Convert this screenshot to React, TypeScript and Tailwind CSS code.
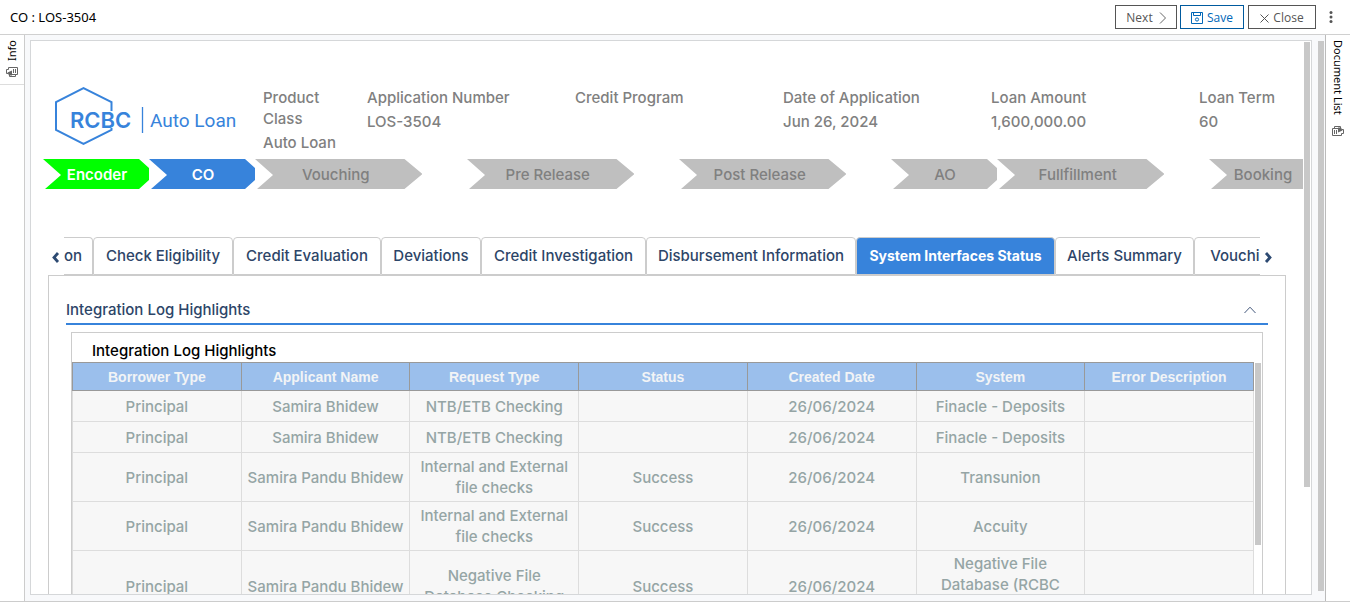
import type { ReactNode } from "react";

const FIELDS = [
  { label: "Product Class", value: "Auto Loan", span: "col-span-1 pr-5" },
  { label: "Application Number", value: "LOS-3504", span: "col-span-2" },
  { label: "Credit Program", value: "", span: "col-span-2" },
  { label: "Date of Application", value: "Jun 26, 2024", span: "col-span-2" },
  { label: "Loan Amount", value: "1,600,000.00", span: "col-span-2" },
  { label: "Loan Term", value: "60", span: "col-span-1" },
];

const STAGES = [
  { name: "Encoder", wide: false, tone: "bg-[#00ff00] text-white font-semibold" },
  { name: "CO", wide: false, tone: "bg-[#3783db] text-white font-semibold" },
  { name: "Vouching", wide: true, tone: "bg-[#bfbfbf] text-[#808080]" },
  { name: "Pre Release", wide: true, tone: "bg-[#bfbfbf] text-[#808080]" },
  { name: "Post Release", wide: true, tone: "bg-[#bfbfbf] text-[#808080]" },
  { name: "AO", wide: false, tone: "bg-[#bfbfbf] text-[#808080]" },
  { name: "Fullfillment", wide: true, tone: "bg-[#bfbfbf] text-[#808080]" },
  { name: "Booking", wide: false, tone: "bg-[#bfbfbf] text-[#808080]" },
];

const TABS = [
  { name: "on", width: "w-[29px] rounded-tl-none border-l-0 text-left" },
  { name: "Check Eligibility", width: "w-[140px]" },
  { name: "Credit Evaluation", width: "w-[148px]" },
  { name: "Deviations", width: "w-[100px]" },
  { name: "Credit Investigation", width: "w-[165px]" },
  { name: "Disbursement Information", width: "w-[210px]" },
  { name: "System Interfaces Status", width: "w-[199px]", active: true },
  { name: "Alerts Summary", width: "w-[139px]" },
  { name: "Vouching", width: "w-[100px]" },
];

const COLUMNS = [
  "Borrower Type",
  "Applicant Name",
  "Request Type",
  "Status",
  "Created Date",
  "System",
  "Error Description",
];

const ROWS = [
  { height: "h-[31px]", cells: ["Principal", "Samira Bhidew", "NTB/ETB Checking", "", "26/06/2024", "Finacle - Deposits", ""] },
  { height: "h-[31px]", cells: ["Principal", "Samira Bhidew", "NTB/ETB Checking", "", "26/06/2024", "Finacle - Deposits", ""] },
  { height: "h-[49px]", cells: ["Principal", "Samira Pandu Bhidew", "Internal and External\nfile checks", "Success", "26/06/2024", "Transunion", ""] },
  { height: "h-[49px]", cells: ["Principal", "Samira Pandu Bhidew", "Internal and External\nfile checks", "Success", "26/06/2024", "Accuity", ""] },
  { height: "h-[71px]", top: true, cells: ["Principal", "Samira Pandu Bhidew", "Negative File\nDatabase Checking", "Success", "26/06/2024", "Negative File\nDatabase (RCBC", ""] },
];

function Logo() {
  return (
    <svg width="186" height="60" viewBox="0 0 186 60" role="img" aria-label="RCBC Auto Loan" className="max-w-none">
      <path
        d="M56.5 24V15L28.5 1.2L1 15V43L28.5 57L56.5 43V41"
        fill="none"
        stroke="#3783db"
        strokeWidth="2"
      />
      <text x="15" y="41" fill="#3783db" className="font-['Inter'] text-[22px] font-semibold">RCBC</text>
      <path d="M87.5 20V46" stroke="#3783db" strokeWidth="1.3" />
      <text x="95" y="40" fill="#3783db" className="font-['Roboto'] text-[19px] font-normal">Auto Loan</text>
    </svg>
  );
}

function PanelIcon({ flip = false }: { flip?: boolean }) {
  return (
    <svg width="12" height="11" viewBox="0 0 12 11" fill="none" stroke="#666" className={flip ? "rotate-180" : ""} aria-hidden="true">
      <path d="M2.5 2.5V.5H11.5V7.5H5M9.5 7.5V9.5H3.5V7.5M2.5 2.5H.5V6.5H2M7.5 2V6M9.5 2V6" />
      <path d="M1.5 5.5L6 3.5V8.5H3Z" fill="#666" stroke="none" />
    </svg>
  );
}

function ToolButton({ children, tone }: { children: ReactNode; tone: string }) {
  return (
    <button type="button" className={"flex h-6 items-center justify-center border pt-0.5 text-xs leading-4 " + tone}>
      {children}
    </button>
  );
}

function Chevron({ d }: { d: string }) {
  return (
    <svg width="9" height="11" viewBox="0 0 9 11" fill="none" stroke="#2d4a72" strokeWidth="2.8" aria-hidden="true">
      <path d={d} />
    </svg>
  );
}

export default function App() {
  return (
    <div className="flex h-screen flex-col overflow-hidden border-b border-[#ccc] bg-white font-['Inter',sans-serif] text-[15px] font-medium">
      <header className="flex h-[35px] shrink-0 items-center justify-between border-b border-[#d0d0d0] pl-2.5 pr-3 font-['Open_Sans',sans-serif] font-normal">
        <h1 className="pt-0.5 font-['Noto_Sans',sans-serif] text-[13px] text-black">CO : LOS-3504</h1>
        <div className="flex items-center gap-[3px]">
          <ToolButton tone="w-[62px] gap-1.5 border-[#555] text-[#555]">
            Next
            <svg width="7" height="12" viewBox="0 0 7 12" fill="none" stroke="#666" aria-hidden="true">
              <path d="M1 .5L6.5 6L1 11.5" />
            </svg>
          </ToolButton>
          <ToolButton tone="w-16 gap-1 border-[#005a9e] text-[#0067b8]">
            <svg width="12" height="12" viewBox="0 0 12 12" fill="none" stroke="#0067b8" aria-hidden="true">
              <path d="M.5.5H11.5V11.5H.5ZM2.5.5V3.5H9.5V.5" />
              <circle cx="6" cy="7.5" r="1.6" />
            </svg>
            Save
          </ToolButton>
          <div className="pl-px">
            <ToolButton tone="w-[68px] gap-1 border-[#555] text-[#555]">
              <svg width="9" height="9" viewBox="0 0 9 9" fill="none" stroke="#555" aria-hidden="true">
                <path d="M.5.5L8.5 8.5M8.5.5L.5 8.5" />
              </svg>
              Close
            </ToolButton>
          </div>
          <button type="button" aria-label="More" className="flex w-[19px] justify-end pr-[5px]">
            <svg width="4" height="12" viewBox="0 0 4 12" fill="#555" aria-hidden="true">
              <circle cx="2" cy="1.6" r="1.5" />
              <circle cx="2" cy="6" r="1.5" />
              <circle cx="2" cy="10.4" r="1.5" />
            </svg>
          </button>
        </div>
      </header>

      <div className="flex min-h-0 flex-1">
        <aside className="w-[25px] shrink-0 border-r border-[#ccc] font-['Noto_Sans',sans-serif] font-normal">
          <button type="button" className="flex h-[50px] w-full flex-col items-center justify-between border-b border-[#ddd] pb-1.5 pt-[5px] text-[11px] leading-4 text-black">
            <span className="rotate-180 [writing-mode:vertical-rl]">Info</span>
            <PanelIcon />
          </button>
        </aside>

        <div className="flex min-w-0 flex-1 bg-[#f8f9fb] pl-[5px] pt-[5px]">
          <main className="mb-1.5 flex min-w-0 flex-1 overflow-hidden border border-[#d5d7d9] bg-white">
            <div className="min-w-0 flex-1 overflow-hidden pt-[46px]">
              <section className="grid grid-cols-12 pl-6 text-[#808080]">
                <div className="col-span-2">
                  <Logo />
                </div>
                {FIELDS.map((f) => (
                  <div key={f.label} className={f.span + " leading-[21px]"}>
                    <div>{f.label}</div>
                    <div className="-mr-5 mt-[3px]">{f.value}</div>
                  </div>
                ))}
              </section>

              <ol className="-mr-3 ml-3 mt-1.5 grid grid-cols-12">
                {STAGES.map((s) => (
                  <li key={s.name} className={s.wide ? "col-span-2" : "col-span-1"}>
                    <div
                      className={
                        "flex h-[30px] items-center justify-center pt-0.5 " +
                        (s.wide
                          ? "w-[79%] pr-1.5 [clip-path:polygon(0_0,calc(100%_-_18px)_0,100%_50%,calc(100%_-_18px)_100%,2px_100%,18px_53%)] "
                          : "w-full pl-0.5 [clip-path:polygon(0_0,calc(100%_-_10px)_0,100%_9px,100%_21px,calc(100%_-_10px)_100%,2px_100%,18px_53%)] ") +
                        s.tone
                      }
                    >
                      {s.name}
                    </div>
                  </li>
                ))}
              </ol>

              <div className="mx-[17px] mt-12 flex text-[#2d4568]">
                <button type="button" aria-label="Previous tabs" className="w-4 pl-[3px] pt-0.5">
                  <Chevron d="M7 1L3 5.5L7 10" />
                </button>
                <div role="tablist" className="flex min-w-0 flex-1 overflow-hidden">
                  {TABS.map((t) => (
                    <button
                      key={t.name}
                      type="button"
                      role="tab"
                      aria-selected={!!t.active}
                      className={
                        "h-[38px] shrink-0 whitespace-nowrap rounded-t border border-[#ccc] " +
                        t.width +
                        (t.active ? " bg-[#3783db] text-sm font-bold text-white" : "")
                      }
                    >
                      {t.name}
                    </button>
                  ))}
                </div>
                <button type="button" aria-label="Next tabs" className="w-[26px] pl-1 pt-0.5">
                  <Chevron d="M2 1L6 5.5L2 10" />
                </button>
              </div>

              <section className="mx-[17px] border border-[#ccc] px-[17px] pt-6">
                <div className="flex h-[25px] items-start justify-between border-b-2 border-[#3783db] pr-3 leading-5 text-[#2d4568]">
                  <h2>Integration Log Highlights</h2>
                  <button type="button" aria-label="Collapse" className="pt-1.5">
                    <svg width="12" height="8" viewBox="0 0 12 8" fill="none" stroke="#44587c" aria-hidden="true">
                      <path d="M.5 7L6 1.2L11.5 7" />
                    </svg>
                  </button>
                </div>

                <div className="mx-[5px] mt-[7px] h-[400px] border border-[#ccc]">
                  <h3 className="h-[29px] pl-5 pt-2 leading-5 text-black">Integration Log Highlights</h3>
                  <div className="flex gap-px">
                    <div className="min-w-0 flex-1">
                      <table className="w-full table-fixed border-collapse">
                        <thead>
                          <tr className="h-7 bg-[#9bbfec] text-[#f2f4f6]">
                            {COLUMNS.map((c) => (
                              <th key={c} className="border border-[#999] p-0 font-['Liberation_Sans',sans-serif] text-sm font-bold leading-5">
                                {c}
                              </th>
                            ))}
                          </tr>
                        </thead>
                        <tbody className="bg-[#f7f7f7] text-[#95a5a5]">
                          {ROWS.map((r, i) => (
                            <tr key={i} className={r.height}>
                              {r.cells.map((c, j) => (
                                <td
                                  key={j}
                                  className={
                                    "whitespace-pre-line border border-[#ddd] p-0 text-center leading-[21px] " +
                                    (r.top && j === 5 ? "pt-0.5 align-top" : "align-middle")
                                  }
                                >
                                  {c}
                                </td>
                              ))}
                            </tr>
                          ))}
                        </tbody>
                      </table>
                    </div>
                    <div className="w-[7px] pt-px">
                      <div className="h-[182px] w-1.5 bg-[#c8c8c8]" />
                    </div>
                  </div>
                </div>
              </section>
            </div>
            <div className="w-2 pl-px pt-px">
              <div className="h-[445px] w-1.5 bg-[#c8c8c8]" />
            </div>
          </main>
          <div className="w-[13px] pb-2.5 pl-1.5 pt-px">
            <div className="h-full w-1.5 bg-[#c8c8c8]" />
          </div>
        </div>

        <aside className="w-[25px] shrink-0 border-l border-[#bbb] font-['Noto_Sans',sans-serif] font-normal">
          <button type="button" className="flex w-full flex-col items-center gap-2.5 pt-[5px] text-[11px] leading-4 text-black">
            <span className="[writing-mode:vertical-rl]">Document List</span>
            <PanelIcon flip />
          </button>
        </aside>
      </div>
    </div>
  );
}
